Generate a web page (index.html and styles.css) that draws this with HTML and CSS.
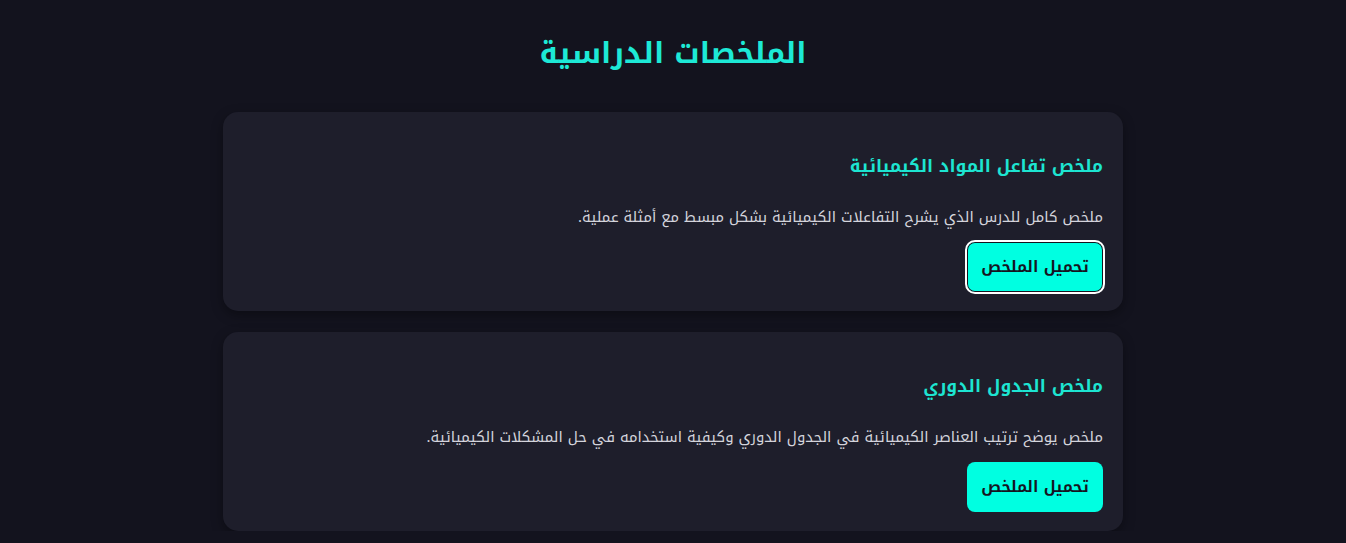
FILE: index.html
```html
<!DOCTYPE html>
<html lang="ar" dir="rtl">
<head>
<meta charset="utf-8">
<title>الملخصات الدراسية</title>
<link rel="stylesheet" href="styles.css">
</head>
<body>
<main class="page">
  <h1 class="page-title">الملخصات الدراسية</h1>
  <section class="list">
    <article class="card">
      <h3 class="card-title">ملخص تفاعل المواد الكيميائية</h3>
      <p class="card-text">ملخص كامل للدرس الذي يشرح التفاعلات الكيميائية بشكل مبسط مع أمثلة عملية.</p>
      <button class="btn btn-focus" type="button">تحميل الملخص</button>
    </article>
    <article class="card">
      <h3 class="card-title">ملخص الجدول الدوري</h3>
      <p class="card-text">ملخص يوضح ترتيب العناصر الكيميائية في الجدول الدوري وكيفية استخدامه في حل المشكلات الكيميائية.</p>
      <button class="btn" type="button">تحميل الملخص</button>
    </article>
  </section>
</main>
</body>
</html>
```

FILE: styles.css
```css
html, body {
  margin: 0;
  padding: 0;
  background: #13131e;
  overflow: hidden;
}
body {
  font-family: "Noto Kufi Arabic", "Noto Sans Arabic", "DejaVu Sans", "Noto Sans", sans-serif;
  color: #d4d4dc;
}
.page {
  display: flex;
  flex-direction: column;
  align-items: center;
}
.page-title {
  margin: 29px 0 35px;
  font-size: 29.3px;
  line-height: 48px;
  font-weight: 700;
  color: #1de9d6;
}
.list {
  width: 900px;
  display: flex;
  flex-direction: column;
  gap: 21px;
}
.card {
  background: #1e1e2b;
  border-radius: 15px;
  padding: 40px 20px 19px;
  box-shadow: 0 4px 12px rgba(0, 0, 0, 0.35);
  display: flex;
  flex-direction: column;
  align-items: flex-start;
}
.card-title {
  margin: 0;
  font-size: 17.4px;
  line-height: 30px;
  font-weight: 700;
  color: #1de5d2;
}
.card-text {
  margin: 21px 0 0;
  font-size: 14.9px;
  line-height: 28px;
  color: #d4d4dc;
}
.btn {
  margin-top: 11px;
  width: 136px;
  height: 50px;
  border: none;
  border-radius: 8px;
  background: #00ffe1;
  color: #15151f;
  font-family: inherit;
  font-size: 15.5px;
  font-weight: 700;
  cursor: pointer;
}
.btn-focus {
  box-shadow: inset 0 0 0 1px #15151f;
  outline: 2px solid #ffffff;
  outline-offset: 0;
}
```
